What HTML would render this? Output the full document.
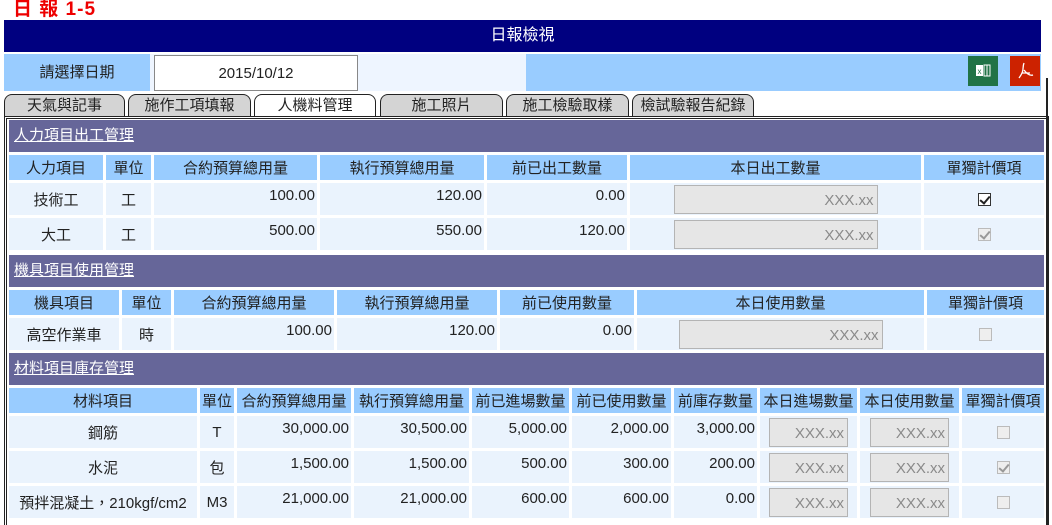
<!DOCTYPE html>
<html style="width:1052px;height:525px;overflow:hidden"><head><meta charset="utf-8"><style>
*{margin:0;padding:0;box-sizing:border-box}
body{width:1052px;height:525px;overflow:hidden;background:#fff;font-family:"Liberation Sans","Noto Sans CJK TC",sans-serif;font-size:15px;color:#222;position:relative}
.abs{position:absolute}
.title{left:13px;top:0;color:#e00;font-weight:bold;font-size:19px;letter-spacing:1px;line-height:20px}
.bar{left:4px;top:20px;width:1037px;height:32px;background:#000080;color:#fff;text-align:center;line-height:32px;font-size:16px}
.tab{top:94px;height:23px;border:1px solid #222;border-bottom:none;border-radius:8px 8px 0 0;background:#d4d4d4;text-align:center;line-height:22px;font-size:15px;color:#222}
.frame{left:4px;top:116px;width:1045px;height:412px;border:1px solid #222;}
.frame2{left:6px;top:118px;width:1041px;height:410px;border:1px solid #222;}
.sec{left:9px;width:1035px;height:32px;background:#666699;color:#fff;line-height:32px;padding-left:5px;text-decoration:underline;font-size:15px}
table{position:absolute;left:6px;width:1041px;border-collapse:separate;border-spacing:3px;table-layout:fixed}
th{background:#99ccff;font-weight:normal;height:25px;padding:0;text-align:center;font-size:15px;color:#222}
td{background:#eaf3fd;height:32px;padding:0;text-align:center;font-size:15px}
td.n{text-align:right;vertical-align:top;padding-top:4px;padding-right:2px}
.in{display:inline-block;height:29px;background:#e6e6e6;border:1px solid #b4b4b4;color:#8a8a8a;text-align:right;line-height:30px;padding-right:3px;vertical-align:middle}
.cb{display:inline-block;width:13px;height:13px;border:1px solid #bbb;background:#eee;vertical-align:middle;position:relative}
.cb.on{border-color:#333;background:#fff}
.cb.on::after,.cb.dis::after{content:"";position:absolute;left:3px;top:0px;width:4px;height:8px;border:solid #222;border-width:0 2px 2px 0;transform:rotate(40deg)}
.cb.dis::after{border-color:#999}
</style></head><body>
<div class="abs title">日 報 1-5</div>
<div class="abs bar">日報檢視</div>
<div class="abs" style="left:4px;top:54px;width:146px;height:37px;background:#99ccff;text-align:center;line-height:37px">請選擇日期</div>
<div class="abs" style="left:150px;top:54px;width:376px;height:37px;background:#eef5ff"></div>
<div class="abs" style="left:154px;top:55px;width:204px;height:36px;background:#fff;border:1px solid #888;text-align:center;line-height:36px">2015/10/12</div>
<div class="abs" style="left:526px;top:54px;width:515px;height:37px;background:#99ccff"></div>
<div class="abs" style="left:968px;top:56px;width:30px;height:30px;background:#217346">
<svg width="30" height="30"><rect x="8" y="9" width="7" height="11" fill="#fff"/><text x="9.5" y="18" font-size="8" fill="#217346" font-family="Liberation Sans">x</text><rect x="16" y="9" width="6" height="11" fill="none" stroke="#fff" stroke-width="1"/><line x1="19" y1="9" x2="19" y2="20" stroke="#fff"/></svg></div>
<div class="abs" style="left:1010px;top:56px;width:30px;height:30px;background:#cc2200">
<svg width="30" height="30"><path d="M14 7 C12 12 15 14 9 22 M14 14 C17 18 20 20 23 19 M12 17 L20 17" fill="none" stroke="#fff" stroke-width="1.3"/></svg></div>
<div class="abs" style="left:1046px;top:78px;width:2px;height:447px;background:#222"></div>

<div class="abs tab" style="left:4px;width:121px">天氣與記事</div>
<div class="abs tab" style="left:128px;width:123px">施作工項填報</div>
<div class="abs tab" style="left:254px;width:122px;background:#fff">人機料管理</div>
<div class="abs tab" style="left:380px;width:123px">施工照片</div>
<div class="abs tab" style="left:506px;width:123px">施工檢驗取樣</div>
<div class="abs tab" style="left:632px;width:122px">檢試驗報告紀錄</div>

<div class="abs frame"></div>
<div class="abs frame2"></div>

<div class="abs sec" style="top:120px">人力項目出工管理</div>
<table style="top:152px">
<colgroup><col style="width:94px"><col style="width:45px"><col style="width:163px"><col style="width:164px"><col style="width:140px"><col style="width:291px"><col style="width:120px"></colgroup>
<tr><th>人力項目</th><th>單位</th><th>合約預算總用量</th><th>執行預算總用量</th><th>前已出工數量</th><th>本日出工數量</th><th>單獨計價項</th></tr>
<tr><td>技術工</td><td>工</td><td class="n">100.00</td><td class="n">120.00</td><td class="n">0.00</td><td><span class="in" style="width:204px">XXX.xx</span></td><td><span class="cb on"></span></td></tr>
<tr><td>大工</td><td>工</td><td class="n">500.00</td><td class="n">550.00</td><td class="n">120.00</td><td><span class="in" style="width:204px">XXX.xx</span></td><td><span class="cb dis"></span></td></tr>
</table>

<div class="abs sec" style="top:255px">機具項目使用管理</div>
<table style="top:287px">
<colgroup><col style="width:110px"><col style="width:49px"><col style="width:160px"><col style="width:160px"><col style="width:134px"><col style="width:287px"><col style="width:117px"></colgroup>
<tr><th>機具項目</th><th>單位</th><th>合約預算總用量</th><th>執行預算總用量</th><th>前已使用數量</th><th>本日使用數量</th><th>單獨計價項</th></tr>
<tr><td>高空作業車</td><td>時</td><td class="n">100.00</td><td class="n">120.00</td><td class="n">0.00</td><td><span class="in" style="width:204px">XXX.xx</span></td><td><span class="cb"></span></td></tr>
</table>

<div class="abs sec" style="top:353px">材料項目庫存管理</div>
<table style="top:385px">
<colgroup><col style="width:188px"><col style="width:34px"><col style="width:114px"><col style="width:115px"><col style="width:97px"><col style="width:99px"><col style="width:83px"><col style="width:97px"><col style="width:99px"><col style="width:82px"></colgroup>
<tr><th>材料項目</th><th>單位</th><th>合約預算總用量</th><th>執行預算總用量</th><th>前已進場數量</th><th>前已使用數量</th><th>前庫存數量</th><th>本日進場數量</th><th>本日使用數量</th><th>單獨計價項</th></tr>
<tr><td>鋼筋</td><td>T</td><td class="n">30,000.00</td><td class="n">30,500.00</td><td class="n">5,000.00</td><td class="n">2,000.00</td><td class="n">3,000.00</td><td><span class="in" style="width:79px">XXX.xx</span></td><td><span class="in" style="width:79px">XXX.xx</span></td><td><span class="cb"></span></td></tr>
<tr><td>水泥</td><td>包</td><td class="n">1,500.00</td><td class="n">1,500.00</td><td class="n">500.00</td><td class="n">300.00</td><td class="n">200.00</td><td><span class="in" style="width:79px">XXX.xx</span></td><td><span class="in" style="width:79px">XXX.xx</span></td><td><span class="cb dis"></span></td></tr>
<tr><td style="white-space:nowrap">預拌混凝土，210kgf/cm2</td><td>M3</td><td class="n">21,000.00</td><td class="n">21,000.00</td><td class="n">600.00</td><td class="n">600.00</td><td class="n">0.00</td><td><span class="in" style="width:79px">XXX.xx</span></td><td><span class="in" style="width:79px">XXX.xx</span></td><td><span class="cb"></span></td></tr>
</table>
</body></html>
